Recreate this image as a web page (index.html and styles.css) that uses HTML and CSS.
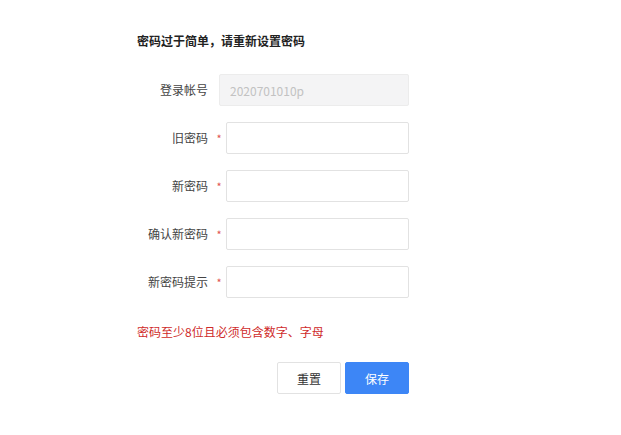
FILE: index.html
```html
<!DOCTYPE html>
<html lang="zh-CN">
<head>
<meta charset="utf-8">
<title>修改密码</title>
<link rel="stylesheet" href="styles.css">
</head>
<body>
<div class="page">
  <h1 class="title">密码过于简单，请重新设置密码</h1>
  <form class="form">
    <div class="row">
      <label class="label">登录帐号</label>
      <input class="input input-disabled" type="text" value="2020701010p" disabled>
    </div>
    <div class="row">
      <label class="label">旧密码</label>
      <span class="star">*</span>
      <input class="input" type="password">
    </div>
    <div class="row">
      <label class="label">新密码</label>
      <span class="star">*</span>
      <input class="input" type="password">
    </div>
    <div class="row">
      <label class="label">确认新密码</label>
      <span class="star">*</span>
      <input class="input" type="password">
    </div>
    <div class="row">
      <label class="label">新密码提示</label>
      <span class="star">*</span>
      <input class="input" type="text">
    </div>
    <p class="tip">密码至少8位且必须包含数字、字母</p>
    <div class="actions">
      <button type="button" class="btn btn-default">重置</button>
      <button type="button" class="btn btn-primary">保存</button>
    </div>
  </form>
</div>
</body>
</html>
```
FILE: styles.css
```css
* { box-sizing: border-box; }
html, body {
  margin: 0;
  padding: 0;
  background: #fff;
}
body {
  font-family: "Noto Sans CJK SC", "Noto Sans", sans-serif;
  font-size: 12px;
  color: #444;
}
.page {
  padding: 31px 0 0 137px;
  width: 409px;
}
.title {
  margin: 0;
  font-size: 12px;
  line-height: 20px;
  font-weight: bold;
  color: #222;
}
.form {
  margin: 23px 0 0 0;
  display: flex;
  flex-direction: column;
  gap: 16px;
}
.row {
  display: flex;
  align-items: center;
  height: 32px;
}
.label {
  width: 71px;
  text-align: right;
  color: #444;
  line-height: 20px;
}
.star {
  width: 18px;
  text-align: center;
  color: #e0554d;
  font-size: 11px;
  padding-left: 4px;
  line-height: 20px;
}
.input {
  flex: 1;
  height: 32px;
  border: 1px solid #e2e2e2;
  border-radius: 2px;
  background: #fff;
  padding: 0 10px;
  font-family: inherit;
  font-size: 12px;
  outline: none;
}
.input-disabled {
  margin-left: 11px;
  background: #f4f4f5;
  border-color: #ececec;
  color: #c2c2c2;
}
.tip {
  margin: 8px 0 0 0;
  color: #cf2b2a;
  font-size: 12px;
  line-height: 20px;
}
.actions {
  display: flex;
  justify-content: flex-end;
  gap: 4px;
  margin-top: 4px;
}
.btn {
  width: 64px;
  height: 32px;
  border-radius: 2px;
  font-family: inherit;
  font-size: 12px;
  cursor: pointer;
}
.btn-default {
  background: #fff;
  border: 1px solid #e2e2e2;
  color: #333;
}
.btn-primary {
  background: #3d86f6;
  border: 1px solid #3d86f6;
  color: #fff;
}
```
